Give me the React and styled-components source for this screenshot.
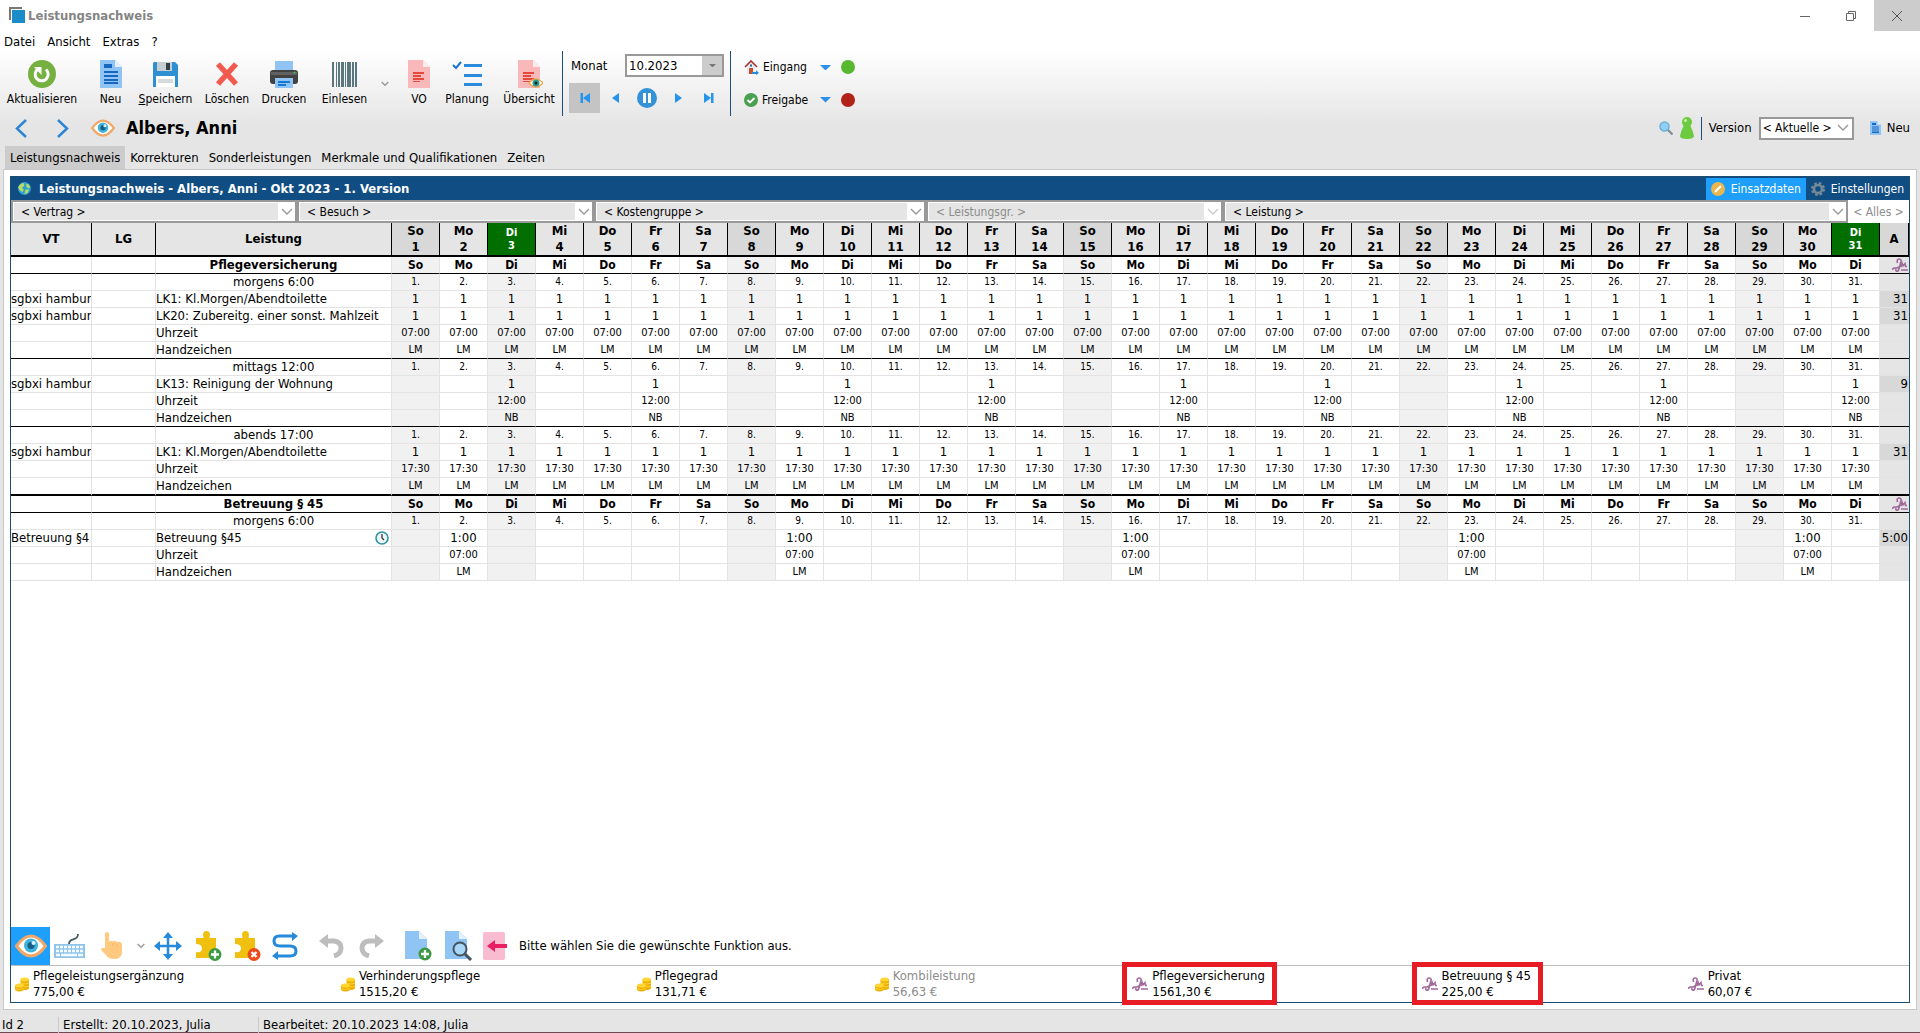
import React from 'react'
import styled, {createGlobalStyle, css} from 'styled-components'

const WEEKDAYS = ['So', 'Mo', 'Di', 'Mi', 'Do', 'Fr', 'Sa']
const DAYS = Array.from({length: 31}, (_, i) => ({
  day: i + 1,
  name: WEEKDAYS[i % 7],
  sunday: i % 7 === 0,
  holiday: i + 1 === 3 || i + 1 === 31,
  shaded: i % 7 === 0 || i + 1 === 3
}))

const ALL = DAYS.map(d => d.day)
const TUE_FRI = DAYS.filter(d => d.name === 'Di' || d.name === 'Fr').map(d => d.day)
const MONDAYS = DAYS.filter(d => d.name === 'Mo').map(d => d.day)

const GROUPS = [
  {
    title: 'Pflegeversicherung',
    visits: [
      {
        title: 'morgens 6:00',
        days: ALL,
        services: [
          {vt: 'sgbxi hambur', name: 'LK1: Kl.Morgen/Abendtoilette', value: '1', sum: '31'},
          {vt: 'sgbxi hambur', name: 'LK20: Zubereitg. einer sonst. Mahlzeit', value: '1', sum: '31'}
        ],
        time: '07:00',
        sign: 'LM'
      },
      {
        title: 'mittags 12:00',
        days: TUE_FRI,
        services: [
          {vt: 'sgbxi hambur', name: 'LK13: Reinigung der Wohnung', value: '1', sum: '9'}
        ],
        time: '12:00',
        sign: 'NB'
      },
      {
        title: 'abends 17:00',
        days: ALL,
        services: [
          {vt: 'sgbxi hambur', name: 'LK1: Kl.Morgen/Abendtoilette', value: '1', sum: '31'}
        ],
        time: '17:30',
        sign: 'LM'
      }
    ]
  },
  {
    title: 'Betreuung § 45',
    visits: [
      {
        title: 'morgens 6:00',
        days: MONDAYS,
        services: [
          {vt: 'Betreuung §4', name: 'Betreuung §45', value: '1:00', sum: '5:00', clock: true}
        ],
        time: '07:00',
        sign: 'LM'
      }
    ]
  }
]

const FILTERS = [
  {label: '< Vertrag >'},
  {label: '< Besuch >'},
  {label: '< Kostengruppe >'},
  {label: '< Leistungsgr. >', disabled: true},
  {label: '< Leistung >'}
]

const BUDGETS = [
  {title: 'Pflegeleistungsergänzung', amount: '775,00 €', coins: true},
  {title: 'Verhinderungspflege', amount: '1515,20 €', coins: true},
  {title: 'Pflegegrad', amount: '131,71 €', coins: true},
  {title: 'Kombileistung', amount: '56,63 €', coins: true, muted: true},
  {title: 'Pflegeversicherung', amount: '1561,30 €', marked: true},
  {title: 'Betreuung § 45', amount: '225,00 €', marked: true},
  {title: 'Privat', amount: '60,07 €'}
]

/* icons */

const AppIcon = () => (
  <svg width="17" height="17" viewBox="0 0 17 17">
    <path d="M0 13V0h13v2H2v11z" fill="#777" />
    <path d="M3 3h13v13H3z" fill="#1a8cc8" />
  </svg>
)

const RefreshIcon = () => (
  <svg width="28" height="28" viewBox="0 0 28 28">
    <circle cx="14" cy="14" r="14" fill="#76b041" />
    <path d="M18 9.500a6.500 6.500 0 1 1-8-.5" fill="none" stroke="#fff" strokeWidth="3" />
    <path d="M6 7h7.500v8z" fill="#fff" />
  </svg>
)

const DocIcon = ({size = 28}) => (
  <svg width={size * 22 / 28} height={size} viewBox="0 0 22 28">
    <path d="M0 0h15l7 7v21H0z" fill="#90c4f5" />
    <path d="M15 0l7 7h-7z" fill="#e3f1fd" />
    <path d="M4 4h8v4H4zM4 11h14v2H4zM4 15h14v2H4zM4 19h14v2H4zM4 22h14v2H4z" fill="#1766c0" />
  </svg>
)

const SaveIcon = () => (
  <svg width="25" height="25" viewBox="0 0 25 25">
    <path d="M1 0h21l3 3v22H0V1z" fill="#2f8fd3" />
    <path d="M4 0h15v9H4z" fill="#c7ced2" />
    <path d="M13 1h4v7h-4z" fill="#333f48" />
    <path d="M3 14h19v11H3z" fill="#fff" />
    <path d="M5 17h15v4H5z" fill="#d5dadc" />
  </svg>
)

const DeleteIcon = () => (
  <svg width="24" height="24" viewBox="0 0 24 24">
    <path d="M3 2l18 20M21 2L3 22" stroke="#f25a50" strokeWidth="5.500" />
  </svg>
)

const PrintIcon = () => (
  <svg width="28" height="27" viewBox="0 0 28 27">
    <path d="M5 0h18v11H5z" fill="#90c4f5" />
    <rect y="9" width="28" height="14" rx="3" fill="#424242" />
    <path d="M1 11h26v3H1z" fill="#616161" />
    <circle cx="24.500" cy="11.500" r="1" fill="#31d843" />
    <path d="M5 17h18v10H5z" fill="#90c4f5" />
    <path d="M8 20h12v2H8zM8 23h8v2H8z" fill="#1976d2" />
  </svg>
)

const BarcodeIcon = () => (
  <svg width="25" height="25" viewBox="0 0 25 25">
    <path
      d="M0 0h2v25H0zM4 0h1v25H4zM6 0h2v25H6zM9 0h3v25H9zM13 0h1v25h-1zM15 0h4v25h-4zM20 0h2v25h-2zM23 0h2v25h-2z"
      fill="#5c7680"
    />
  </svg>
)

const RedDocIcon = ({eye}) => (
  <svg width="28" height="28" viewBox="0 0 28 28">
    <path d="M3 0h15l7 7v21H3z" fill="#f9b9bb" />
    <path d="M18 0l7 7h-7z" fill="#fdeaea" />
    <path d="M8 12h11v2H8zM8 15h8v2H8zM8 18h11v2H8zM8 21h7v1H8z" fill="#e5483d" />
    {eye && (
      <g>
        <path d="M14 23q7-8 14 0q-7 8-14 0z" fill="#fff" stroke="#eca44a" strokeWidth="1.500" />
        <circle cx="21" cy="23" r="3.500" fill="#249c92" />
        <circle cx="21" cy="23" r="1.500" fill="#222" />
      </g>
    )}
  </svg>
)

const PlanIcon = () => (
  <svg width="30" height="26" viewBox="0 0 30 26">
    <path d="M12 4.500h18M12 14.500h18M12 23.500h18" stroke="#2a8bdc" strokeWidth="3" />
    <path d="M1 4l3 3 5-6" fill="none" stroke="#1976d2" strokeWidth="2" />
  </svg>
)

const EyeIcon = ({size = 24}) => (
  <svg width={size} height={size * 3 / 4} viewBox="0 0 32 24">
    <path d="M1.500 12Q16-8 30.500 12Q16 32 1.500 12z" fill="#fff" stroke="#f0a868" strokeWidth="3" />
    <circle cx="16" cy="11.500" r="7" fill="#3fb3dc" />
    <circle cx="16" cy="11.500" r="3.500" fill="#155f86" />
    <circle cx="18.500" cy="9" r="2" fill="#d7f3ff" />
  </svg>
)

const AngleIcon = ({right}) => (
  <svg width="12" height="19" viewBox="0 0 12 19">
    <path d={right ? 'M1 1l9 8.500-9 8.500' : 'M11 1L2 9.500l9 8.500'} fill="none" stroke="#2c86d3" strokeWidth="2.500" />
  </svg>
)

const Chevron = ({width = 12, color = '#999'}) => (
  <svg width={width} height={width / 2 + 2} viewBox="0 0 12 8">
    <path d="M1 1l5 5 5-5" fill="none" stroke={color} strokeWidth={width < 10 ? 2 : 1.400} />
  </svg>
)

const Triangle = ({width = 11, color = '#2a8fe6'}) => (
  <svg width={width} height={width / 2} viewBox="0 0 10 5">
    <path d="M0 0h10L5 5z" fill={color} />
  </svg>
)

const PlayIcon = ({back, edge}) => (
  <svg width="10" height="10" viewBox="0 0 10 10">
    <g transform={back ? 'rotate(180 5 5)' : undefined} fill="#2494ec">
      <path d={edge ? 'M0 0l7 5-7 5z' : 'M2 0l7 5-7 5z'} />
      {edge && <path d="M7 0h2.500v10H7z" />}
    </g>
  </svg>
)

const PauseIcon = () => (
  <svg width="20" height="20" viewBox="0 0 20 20">
    <circle cx="10" cy="10" r="10" fill="#3492d8" />
    <path d="M6 5h3v10H6zM11 5h3v10h-3z" fill="#fff" />
  </svg>
)

const HouseIcon = () => (
  <svg width="15" height="15" viewBox="0 0 15 15">
    <path d="M3 6l4-4 4 4v8H3z" fill="#e8eaec" />
    <path d="M1 7l6-6 6 6" fill="none" stroke="#a83232" strokeWidth="1.600" />
    <path d="M5 8h4v6H5z" fill="#c4512d" />
    <path d="M6 4.500h2v2H6z" fill="#2d5f9b" />
    <path d="M8 12h4v-2l3 3-3 2v-1H8z" fill="#2a8bdc" />
  </svg>
)

const CheckIcon = () => (
  <svg width="14" height="14" viewBox="0 0 14 14">
    <circle cx="7" cy="7" r="7" fill="#4a9f50" />
    <path d="M3.500 7l2.500 2.500L10.500 5" fill="none" stroke="#fff" strokeWidth="1.800" />
  </svg>
)

const SearchIcon = () => (
  <svg width="14" height="14" viewBox="0 0 14 14">
    <path d="M8.500 8.500l5 5" stroke="#7c8b94" strokeWidth="2" />
    <circle cx="5.500" cy="5.500" r="4.500" fill="#90d0f8" stroke="#6fb0d4" strokeWidth="1.500" />
  </svg>
)

const PawnIcon = () => (
  <svg width="14" height="22" viewBox="0 0 14 22">
    <path d="M3 6l.5 3Q1 14 0 19q0 3 7 3t7-3q-1-5-3.500-10L11 6z" fill="#6ccb3e" />
    <circle cx="7" cy="5" r="5" fill="#6ccb3e" />
    <circle cx="5.500" cy="3.500" r="1.500" fill="#c3f0a8" />
  </svg>
)

const GlobeIcon = () => (
  <svg width="13" height="13" viewBox="0 0 14 14">
    <circle cx="7" cy="7" r="7" fill="#2f9fd8" />
    <path d="M2 3l3-2 2 1-1 3-2 1 2 2-1 3-3-2L0 6zM9 2l3 1 1 3-2 1-2-2zM8 8l4 0-2 4-3 1z" fill="#b9dd5a" />
  </svg>
)

const EditIcon = () => (
  <svg width="14" height="14" viewBox="0 0 14 14">
    <circle cx="7" cy="7" r="7" fill="#e9b74e" />
    <path d="M4 10l6-6" stroke="#fff" strokeWidth="2.200" />
  </svg>
)

const GearIcon = () => (
  <svg width="14" height="14" viewBox="0 0 14 14">
    <circle cx="7" cy="7" r="5.700" fill="none" stroke="#738997" strokeWidth="2.600" strokeDasharray="2.600 1.877" />
    <circle cx="7" cy="7" r="4" fill="none" stroke="#738997" strokeWidth="2.600" />
  </svg>
)

const SignatureIcon = () => (
  <svg width="16" height="14" viewBox="0 0 16 14">
    <path
      d="M5.500 5Q4.500 1 7 1t2 2.500L7 11q-.5 2.300-2 2.300T4 11M0 11.500l2-1.500h3l4-2"
      fill="none"
      stroke="#a0699b"
      strokeWidth="1.600"
    />
    <path d="M9 9l1-4 1 3 2-2.500.5 3H15M9 12h7" fill="none" stroke="#a0699b" strokeWidth="1.500" />
  </svg>
)

const ClockIcon = () => (
  <svg width="14" height="14" viewBox="0 0 14 14">
    <circle cx="7" cy="7" r="6" fill="#eef8fa" stroke="#2b93a4" strokeWidth="1.600" />
    <path d="M7 3v4l2 2" fill="none" stroke="#333" strokeWidth="1.300" />
  </svg>
)

const CoinsIcon = () => (
  <svg width="14" height="15" viewBox="0 0 14 15">
    <path d="M5.500 2.500v9q4 3 8.500 0v-9z" fill="#edae00" />
    <path d="M0 8.500v4.500q4.500 3 9 0V8.500z" fill="#edae00" />
    <ellipse cx="9.700" cy="2.500" rx="4.200" ry="2" fill="#ffd633" />
    <ellipse cx="4.500" cy="8.500" rx="4.500" ry="2" fill="#ffd633" />
    <path d="M6 6q4 2 8 0M9 9.500q3 1 5-.5M0 11.500q4.500 2 9 0" fill="none" stroke="#ffd633" />
  </svg>
)

const KeyboardIcon = () => (
  <svg width="31" height="26" viewBox="0 0 31 26">
    <path d="M15 11c0-7 9-2 9-10" fill="none" stroke="#455a64" strokeWidth="1.800" />
    <path d="M0 11h31v14H0z" fill="#8fc4e8" />
    <path d="M2 14h27M2 18h27" stroke="#f4fbff" strokeWidth="2.500" strokeDasharray="3 1" />
    <path d="M2 22h4m1 0h16m1 0h5" stroke="#f4fbff" strokeWidth="2.500" />
  </svg>
)

const HandIcon = () => (
  <svg width="21" height="28" viewBox="0 0 21 28">
    <path
      d="M4 2q0-2 2-2t2 2v8q1-2 4-.5 2-1.500 4 .5 4-1 5 2v9q-1 6-8 6-6 0-8-4l-5-5q0-3 4-2z"
      fill="#ffca80"
    />
    <path d="M12 11v3M16 12v3" stroke="#f2b565" />
  </svg>
)

const MoveIcon = () => (
  <svg width="28" height="28" viewBox="0 0 28 28">
    <path d="M14 3v22M3 14h22" stroke="#2589dc" strokeWidth="2.500" />
    <path d="M14 0l5 6H9zM14 28l5-6H9zM0 14l6-5v10zM28 14l-6-5v10z" fill="#2589dc" />
  </svg>
)

const PuzzleIcon = ({remove}) => (
  <svg width="26" height="30" viewBox="0 0 26 30">
    <path d="M0 7h7q1-1 0-3 0-4 3.500-4T14 4q-1 2 0 3h6v20H0v-6q6 1 6-3.500T0 13z" fill="#f0c010" />
    <circle cx="19" cy="23.500" r="6.500" fill={remove ? '#ee4a1a' : '#3c9a42'} />
    <path
      d={remove ? 'M16.500 21l5 5M21.500 21l-5 5' : 'M19 19.500v8M15 23.500h8'}
      stroke="#fff"
      strokeWidth="2.300"
    />
  </svg>
)

const RouteIcon = () => (
  <svg width="26" height="28" viewBox="0 0 26 28">
    <path d="M22 4H7Q2 4 2 9t6 5h10q6 0 6 5t-6 5H4" fill="none" stroke="#2589dc" strokeWidth="3" />
    <path d="M20 0l6 4-6 5zM6 19l-6 5 6 4z" fill="#2589dc" />
  </svg>
)

const UndoIcon = ({redo}) => (
  <svg width="25" height="24" viewBox="0 0 25 24">
    <g transform={redo ? 'translate(25 0) scale(-1 1)' : undefined}>
      <path d="M8 7h7q7 1 7 7t-7 8" fill="none" stroke="#bdbdbd" strokeWidth="5" />
      <path d="M0 7l9-7v14z" fill="#bdbdbd" />
    </g>
  </svg>
)

const PageIcon = ({search}) => (
  <svg width="28" height="30" viewBox="0 0 28 30">
    <path d="M0 0h14l8 8v20H0z" fill="#90c4f5" />
    <path d="M14 0l8 8h-8z" fill="#e3f1fd" />
    {search ? (
      <g fill="none" stroke="#44545c" strokeWidth="2">
        <circle cx="15" cy="18" r="6.500" fill="#a9d7f8" />
        <path d="M20 23l6 6" strokeWidth="3" />
      </g>
    ) : (
      <g>
        <circle cx="20" cy="23" r="6.500" fill="#3c9a42" />
        <path d="M20 19v8M16 23h8" stroke="#fff" strokeWidth="2.300" />
      </g>
    )}
  </svg>
)

const BackIcon = () => (
  <svg width="24" height="28" viewBox="0 0 24 28">
    <rect width="22" height="28" rx="2" fill="#f8bbd0" />
    <path d="M24 14H10" stroke="#e91e63" strokeWidth="4" />
    <path d="M4 14l8-6v12z" fill="#e91e63" />
  </svg>
)

const MinimizeIcon = () => (
  <svg width="10" height="10" viewBox="0 0 10 10"><path d="M0 5.500h10" stroke="#666" /></svg>
)

const RestoreIcon = () => (
  <svg width="10" height="10" viewBox="0 0 10 10">
    <path d="M.5 2.500h7v7h-7zM2.500 2.500v-2h7v7h-2" fill="none" stroke="#666" />
  </svg>
)

const CloseIcon = () => (
  <svg width="10" height="10" viewBox="0 0 10 10"><path d="M0 0l10 10M10 0L0 10" stroke="#555" /></svg>
)

const GridRow = ({row, end}) => (
  <Row $end={end}>
    <Cell>{row.vt}</Cell>
    <Cell />
    <Cell $center={row.center} $bold={row.bold}>
      {row.clock ? <WithIcon>{row.name}<ClockIcon /></WithIcon> : row.name}
    </Cell>
    {DAYS.map(d => (
      <DayCell key={d.day} $kind={row.kind} $shaded={d.shaded}>{row.cell(d)}</DayCell>
    ))}
    <SumCell $filled={!!row.sum}>{row.bold ? <SignatureIcon /> : row.sum}</SumCell>
  </Row>
)

const VisitRows = ({visit, end}) => {
  const on = text => d => (visit.days.includes(d.day) ? text : '')
  return (
    <>
      <GridRow row={{name: visit.title, center: true, kind: 'date', cell: d => d.day + '.'}} />
      {visit.services.map(s => (
        <GridRow key={s.name} row={{...s, kind: 'value', cell: on(s.value)}} />
      ))}
      <GridRow row={{name: 'Uhrzeit', kind: 'time', cell: on(visit.time)}} />
      <GridRow row={{name: 'Handzeichen', kind: 'sign', cell: on(visit.sign)}} end={end} />
    </>
  )
}

const Schedule = () => (
  <Table>
    <colgroup>
      <Col $width={81} />
      <Col $width={64} />
      <Col $width={236} />
      {DAYS.map(d => <col key={d.day} />)}
      <Col $width={29} />
    </colgroup>
    <thead>
      <tr>
        <HeadCell>VT</HeadCell>
        <HeadCell>LG</HeadCell>
        <HeadCell>Leistung</HeadCell>
        {DAYS.map(d => (
          <HeadCell key={d.day} $dark={d.sunday} $holiday={d.holiday}>
            {d.name}<br />{d.day}
          </HeadCell>
        ))}
        <HeadCell $dark>A</HeadCell>
      </tr>
    </thead>
    <tbody>
      {GROUPS.map((group, g) => (
        <React.Fragment key={group.title}>
          <GridRow
            row={{name: group.title, center: true, bold: true, kind: 'name', cell: d => d.name}}
            end="line"
          />
          {group.visits.map((visit, v) => {
            const lastVisit = v === group.visits.length - 1
            const lastGroup = g === GROUPS.length - 1
            return (
              <VisitRows
                key={visit.title}
                visit={visit}
                end={!lastVisit ? 'line' : lastGroup ? undefined : 'thick'}
              />
            )
          })}
        </React.Fragment>
      ))}
    </tbody>
  </Table>
)

export default function App() {
  return (
    <Window>
      <GlobalStyle />

      <TitleBar>
        <AppIcon />
        <WindowTitle>Leistungsnachweis</WindowTitle>
        <WindowButton aria-label="Minimieren"><MinimizeIcon /></WindowButton>
        <WindowButton aria-label="Wiederherstellen"><RestoreIcon /></WindowButton>
        <WindowButton aria-label="Schließen" $active><CloseIcon /></WindowButton>
      </TitleBar>

      <MenuBar>
        <MenuItem>Datei</MenuItem>
        <MenuItem>Ansicht</MenuItem>
        <MenuItem>Extras</MenuItem>
        <MenuItem>?</MenuItem>
      </MenuBar>

      <Toolbar>
        <ToolButton $width={84}><IconSlot><RefreshIcon /></IconSlot>Aktualisieren</ToolButton>
        <ToolButton $width={53}><IconSlot><DocIcon /></IconSlot>Neu</ToolButton>
        <ToolButton $width={57}><IconSlot><SaveIcon /></IconSlot><span><u>S</u>peichern</span></ToolButton>
        <ToolButton $width={66}><IconSlot><DeleteIcon /></IconSlot>Löschen</ToolButton>
        <ToolButton $width={48}><IconSlot><PrintIcon /></IconSlot>Drucken</ToolButton>
        <ToolButton $width={73}><IconSlot><BarcodeIcon /></IconSlot>Einlesen</ToolButton>
        <CaretButton aria-label="Einlesen Optionen"><Chevron width={8} /></CaretButton>
        <ToolButton $width={38}><IconSlot><RedDocIcon /></IconSlot>VO</ToolButton>
        <ToolButton $width={58}><IconSlot><PlanIcon /></IconSlot>Planung</ToolButton>
        <ToolButton $width={66}><IconSlot><RedDocIcon eye /></IconSlot>Übersicht</ToolButton>
        <Divider />
        <MonthBox>
          <MonthLine>
            <label htmlFor="month">Monat</label>
            <SelectBox $month>
              <Select id="month"><option>10.2023</option></Select>
              <Arrow $grey><Triangle width={7} color="#777" /></Arrow>
            </SelectBox>
          </MonthLine>
          <MonthNav>
            <NavButton aria-label="Erster Monat" $active><PlayIcon back edge /></NavButton>
            <NavButton aria-label="Voriger Monat"><PlayIcon back /></NavButton>
            <NavButton aria-label="Aktueller Monat"><PauseIcon /></NavButton>
            <NavButton aria-label="Nächster Monat"><PlayIcon /></NavButton>
            <NavButton aria-label="Letzter Monat"><PlayIcon edge /></NavButton>
          </MonthNav>
        </MonthBox>
        <Divider />
        <StateBox>
          <StateButton><HouseIcon />Eingang</StateButton>
          <Triangle />
          <Dot $color="#56b930" />
          <StateButton><CheckIcon />Freigabe</StateButton>
          <Triangle />
          <Dot $color="#b12219" />
        </StateBox>
      </Toolbar>

      <PersonBar>
        <PlainButton aria-label="Zurück"><AngleIcon /></PlainButton>
        <PlainButton aria-label="Weiter"><AngleIcon right /></PlainButton>
        <Person><EyeIcon />Albers, Anni</Person>
        <VersionBox>
          <SearchIcon />
          <PawnIcon />
          <ShortDivider />
          <label htmlFor="version">Version</label>
          <SelectBox $version>
            <Select id="version"><option>&lt; Aktuelle &gt;</option></Select>
            <Arrow><Chevron /></Arrow>
          </SelectBox>
          <NewVersion><DocIcon size={14} />Neu</NewVersion>
        </VersionBox>
      </PersonBar>

      <Tabs>
        <Tab href="#leistungsnachweis" $active>Leistungsnachweis</Tab>
        <Tab href="#korrekturen">Korrekturen</Tab>
        <Tab href="#sonderleistungen">Sonderleistungen</Tab>
        <Tab href="#merkmale">Merkmale und Qualifikationen</Tab>
        <Tab href="#zeiten">Zeiten</Tab>
      </Tabs>

      <Page>
        <Panel>
          <PanelHeader>
            <GlobeIcon />
            <PanelTitle>Leistungsnachweis - Albers, Anni - Okt 2023 - 1. Version</PanelTitle>
            <HeaderButton $active><EditIcon />Einsatzdaten</HeaderButton>
            <HeaderButton><GearIcon />Einstellungen</HeaderButton>
          </PanelHeader>

          <Filters>
            {FILTERS.map(f => (
              <SelectBox key={f.label} $filter>
                <Select aria-label={f.label} disabled={f.disabled}><option>{f.label}</option></Select>
                <Arrow><Chevron color={f.disabled ? '#ccc' : '#999'} /></Arrow>
              </SelectBox>
            ))}
            <AllButton disabled>&lt; Alles &gt;</AllButton>
          </Filters>

          <Content><Schedule /></Content>

          <Functions>
            <FunctionButton aria-label="Ansehen" $width={39} $active><EyeIcon size={32} /></FunctionButton>
            <FunctionButton aria-label="Tastatur" $width={38}><KeyboardIcon /></FunctionButton>
            <FunctionButton aria-label="Auswählen" $width={46}><HandIcon /></FunctionButton>
            <FunctionButton aria-label="Auswahl Optionen" $width={14}><Chevron width={8} /></FunctionButton>
            <FunctionButton aria-label="Verschieben" $width={40}><MoveIcon /></FunctionButton>
            <FunctionButton aria-label="Hinzufügen" $width={42}><PuzzleIcon /></FunctionButton>
            <FunctionButton aria-label="Entfernen" $width={36}><PuzzleIcon remove /></FunctionButton>
            <FunctionButton aria-label="Tauschen" $width={38}><RouteIcon /></FunctionButton>
            <FunctionButton aria-label="Rückgängig" $width={39} $apart><UndoIcon /></FunctionButton>
            <FunctionButton aria-label="Wiederholen" $width={40}><UndoIcon redo /></FunctionButton>
            <FunctionButton aria-label="Neue Seite" $width={40} $apart><PageIcon /></FunctionButton>
            <FunctionButton aria-label="Seite suchen" $width={40}><PageIcon search /></FunctionButton>
            <FunctionButton aria-label="Schließen" $width={32}><BackIcon /></FunctionButton>
            <Hint>Bitte wählen Sie die gewünschte Funktion aus.</Hint>
          </Functions>

          <Budgets>
            {BUDGETS.map(b => (
              <Budget key={b.title}>
                <BudgetBox $marked={b.marked} $muted={b.muted}>
                  {b.coins ? <CoinsIcon /> : <SignatureIcon />}
                  <div>{b.title}<br />{b.amount}</div>
                </BudgetBox>
              </Budget>
            ))}
          </Budgets>
        </Panel>
      </Page>

      <StatusBar>
        <StatusItem $width={58}>Id 2</StatusItem>
        <StatusItem $width={200}>Erstellt: 20.10.2023, Julia</StatusItem>
        <StatusItem>Bearbeitet: 20.10.2023 14:08, Julia</StatusItem>
      </StatusBar>
    </Window>
  )
}

const GlobalStyle = createGlobalStyle`
  * {
    box-sizing: border-box;
  }

  body {
    margin: 0;
  }

  body, button, select {
    font-family: Tahoma, "DejaVu Sans Condensed", "DejaVu Sans", sans-serif;
    font-size: 13px;
    line-height: 16px;
    color: #000;
  }

  button {
    border: 0;
    padding: 0;
    background: none;
    white-space: nowrap;
  }

  svg {
    display: block;
    flex: none;
  }
`

const Window = styled.div`
  display: flex;
  flex-direction: column;
  min-height: 100vh;
  background: linear-gradient(#fff 50px, #e5e5e5 125px);
  border-bottom: 1px solid #6b4a52;
`

const TitleBar = styled.header`
  display: flex;
  align-items: center;
  height: 31px;
  padding-left: 9px;
`

const WindowTitle = styled.div`
  flex: 1;
  padding-left: 2px;
  font-weight: bold;
  color: #858585;
`

const WindowButton = styled.button`
  display: flex;
  align-items: center;
  justify-content: center;
  width: 46px;
  height: 31px;
  background: ${p => (p.$active ? '#ccc' : 'transparent')};
`

const MenuBar = styled.nav`
  display: flex;
  gap: 12px;
  height: 20px;
  padding-left: 4px;
`

const MenuItem = styled.button`
  height: 21px;
`

const Toolbar = styled.div`
  display: flex;
  height: 65px;
`

const ToolButton = styled.button`
  display: flex;
  flex-direction: column;
  align-items: center;
  width: ${p => p.$width}px;
  padding-top: 8px;
  font-size: 12px;
`

const IconSlot = styled.span`
  display: flex;
  align-items: center;
  height: 30px;
  margin-bottom: 2px;
`

const CaretButton = styled.button`
  width: 19px;
`

const Divider = styled.div`
  width: 1px;
  height: 65px;
  background: #1d4d80;
`

const MonthBox = styled.div`
  display: flex;
  flex-direction: column;
  justify-content: space-between;
  width: 167px;
  padding: 3px 6px;
`

const MonthLine = styled.div`
  display: flex;
  justify-content: space-between;
  align-items: center;
  padding-left: 2px;
`

const SelectBox = styled.div`
  display: grid;
  height: 23px;
  border: 2px solid #999;

  ${p => p.$month && css`
    width: 99px;
  `}

  ${p => p.$version && css`
    width: 95px;

    select {
      font-size: 12px;
    }
  `}

  ${p => p.$filter && css`
    select {
      padding-left: 7px;
      border: 1px solid #fff;
      font-size: 12px;
      background: #e5e5e5;
    }
  `}
`

const Select = styled.select`
  grid-area: 1 / 1;
  appearance: none;
  width: 100%;
  min-width: 0;
  padding: 0 0 0 2px;
  border: 0;
  border-radius: 0;
  background: #fff;

  &:disabled {
    color: #8c8c8c;
    opacity: 1;
  }
`

const Arrow = styled.span`
  grid-area: 1 / 1;
  justify-self: end;
  display: flex;
  align-items: center;
  justify-content: center;
  width: ${p => (p.$grey ? 20 : 17)}px;
  background: ${p => (p.$grey ? '#ccc' : '#fff')};
  pointer-events: none;
`

const MonthNav = styled.div`
  display: flex;
`

const NavButton = styled.button`
  display: flex;
  align-items: center;
  justify-content: center;
  width: 31px;
  height: 30px;
  background: ${p => (p.$active ? '#c4c4c4' : 'transparent')};
`

const StateBox = styled.div`
  display: grid;
  grid-template-columns: 66px 11px 14px;
  column-gap: 10px;
  align-items: center;
  padding-left: 13px;
`

const StateButton = styled.button`
  display: flex;
  align-items: center;
  gap: 4px;
  font-size: 12px;
`

const Dot = styled.span`
  width: 14px;
  height: 14px;
  border-radius: 50%;
  background: ${p => p.$color};
`

const PersonBar = styled.div`
  display: flex;
  align-items: center;
  height: 24px;
  margin-bottom: 6px;
  padding: 0 10px 0 15px;
`

const PlainButton = styled.button`
  width: 42px;

  & + & {
    width: 34px;
  }
`

const Person = styled.h1`
  display: flex;
  align-items: center;
  flex: 1;
  gap: 11px;
  margin: 0;
  font-size: 18px;
`

const VersionBox = styled.div`
  display: flex;
  align-items: center;
  gap: 7px;
`

const ShortDivider = styled.div`
  width: 1px;
  height: 23px;
  background: #1d4d80;
`

const NewVersion = styled.button`
  display: flex;
  align-items: center;
  gap: 6px;
  padding-left: 9px;
`

const Tabs = styled.nav`
  display: flex;
  height: 23px;
  padding-left: 5px;
`

const Tab = styled.a`
  padding: 4px 5px;
  color: #000;
  text-decoration: none;
  background: ${p => (p.$active ? '#ccc' : 'transparent')};
`

const Page = styled.main`
  display: flex;
  flex: 1;
  margin: 0 3px;
  padding: 6px;
  border: 1px solid #c8c8c8;
  background: #fff;
`

const Panel = styled.section`
  display: flex;
  flex-direction: column;
  flex: 1;
  min-width: 0;
  border: 1px solid #1d4d72;
`

const PanelHeader = styled.header`
  display: flex;
  align-items: center;
  height: 23px;
  padding-left: 7px;
  color: #fff;
  background: #0f4d82;
`

const PanelTitle = styled.h2`
  flex: 1;
  margin: 0;
  padding-left: 8px;
  font-size: 13px;
`

const HeaderButton = styled.button`
  display: flex;
  align-items: center;
  gap: 6px;
  height: 22px;
  padding: 0 5px;
  font-size: 12px;
  color: #fff;
  background: ${p => (p.$active ? '#1e9ffb' : 'transparent')};
`

const Filters = styled.div`
  display: grid;
  grid-template-columns: 286fr 297fr 332fr 297fr 625fr 61fr;
`

const AllButton = styled.button`
  font-size: 12px;
  color: #8c8c8c;
  background: #fff;
`

const Content = styled.div`
  flex: 1;
`

const Table = styled.table`
  width: 100%;
  table-layout: fixed;
  border-collapse: separate;
  border-spacing: 0;
`

const Col = styled.col`
  width: ${p => p.$width}px;
`

const HeadCell = styled.th`
  height: 34px;
  padding: 0;
  border-right: 1px solid #000;
  border-bottom: 2px solid #000;
  font-size: 13px;
  line-height: 16px;
  background: ${p => (p.$dark ? '#d8d8d8' : '#e5e5e5')};

  ${p => p.$holiday && css`
    font-size: 11px;
    line-height: 13px;
    color: #fff;
    background: #006f00;
  `}
`

const Cell = styled.td`
  height: 17px;
  padding: 0;
  border-right: 1px solid #e3e3e3;
  border-bottom: 1px solid #e3e3e3;
  overflow: hidden;
  white-space: nowrap;
  text-align: ${p => (p.$center ? 'center' : 'left')};
  font-weight: ${p => (p.$bold ? 'bold' : 'normal')};
`

const KIND_SIZE = {name: 12, date: 10, value: 13, time: 11, sign: 11}

const DayCell = styled(Cell)`
  text-align: center;
  font-size: ${p => KIND_SIZE[p.$kind]}px;
  font-weight: ${p => (p.$kind === 'name' ? 'bold' : 'normal')};
  background: ${p => (p.$shaded ? '#f1f1f1' : '#fff')};
`

const SumCell = styled(Cell)`
  padding: 0 1px 0 0;
  border-right: 0;
  text-align: right;
  background: ${p => (p.$filled ? '#d8d8d8' : '#e5e5e5')};

  svg {
    margin-left: auto;
  }
`

const Row = styled.tr`
  ${p => p.$end === 'line' && css`
    td {
      border-bottom-color: #000;
    }
  `}

  ${p => p.$end === 'thick' && css`
    td {
      height: 18px;
      border-bottom: 2px solid #000;
    }
  `}
`

const WithIcon = styled.div`
  display: flex;
  align-items: center;
  justify-content: space-between;
  padding-right: 2px;
`

const Functions = styled.div`
  display: flex;
  align-items: center;
  border-bottom: 1px solid #bdbdbd;
`

const FunctionButton = styled.button`
  display: flex;
  align-items: center;
  justify-content: center;
  width: ${p => p.$width}px;
  height: 38px;
  margin-left: ${p => (p.$apart ? 8 : 0)}px;
  background: ${p => (p.$active ? '#1e9ffb' : 'transparent')};
`

const Hint = styled.div`
  flex: 1;
  padding-left: 8px;
`

const Budgets = styled.div`
  display: flex;
  padding-left: 4px;
`

const Budget = styled.div`
  display: flex;
  flex: 1 1 auto;
`

const BudgetBox = styled.div`
  display: flex;
  align-items: center;
  gap: 4px;
  height: 36px;
  color: ${p => (p.$muted ? '#8c8c8c' : '#000')};

  ${p => p.$marked && css`
    position: relative;

    &::after {
      content: '';
      position: absolute;
      inset: -4px -12px -3px -10px;
      border: 5px solid #e81c24;
    }
  `}
`

const StatusBar = styled.footer`
  display: flex;
  align-items: center;
  height: 22px;
  padding-top: 8px;
`

const StatusItem = styled.div`
  width: ${p => (p.$width ? p.$width + 'px' : 'auto')};
  padding-left: 2px;

  & + & {
    padding-left: 4px;
    border-left: 1px solid #ccc;
  }
`
